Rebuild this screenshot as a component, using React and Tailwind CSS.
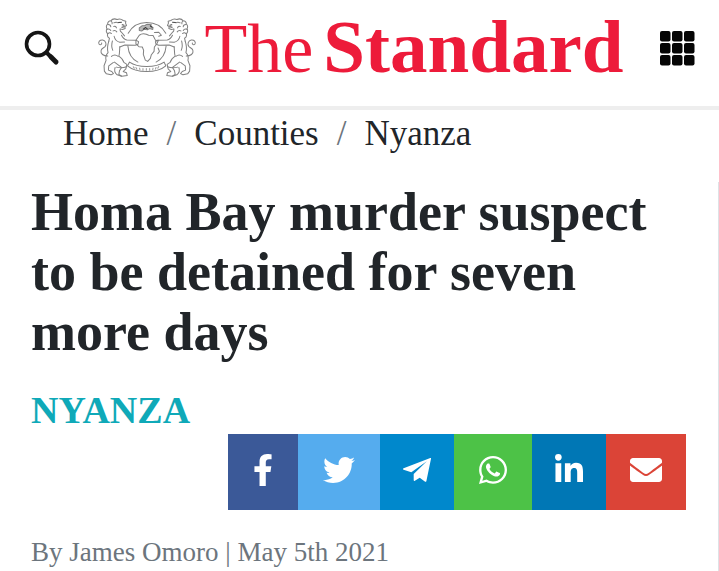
import React from 'react';
import { FaFacebookF, FaTwitter, FaWhatsapp, FaLinkedinIn, FaEnvelope } from 'react-icons/fa';

// Paper plane with the folded wing
const PlaneIcon = () => (
  <svg viewBox="0 0 28 24" className="h-6 w-7" fill="currentColor" aria-hidden="true">
    <path d="M27.300.1c.5-.2.800.100.700.600l-4.600 22.300c-.2.900-.900 1.100-1.600.600l-5.100-3.800-4.800 3c-.7.400-1.200.1-1.200-.7v-6L23.800 3.200 8.300 14.200.6 11.700c-.8-.3-.8-1.100 0-1.400z" />
  </svg>
);

const crumbs = ['Home', 'Counties', 'Nyanza'];

const shareLinks = [
  { name: 'Facebook', icon: FaFacebookF, style: 'w-[70px] bg-[#3b5998]' },
  { name: 'Twitter', icon: FaTwitter, style: 'w-[82px] bg-[#55acee]' },
  { name: 'Telegram', icon: PlaneIcon, style: 'w-[74px] bg-[#0088cc]' },
  { name: 'WhatsApp', icon: FaWhatsapp, style: 'w-[78px] bg-[#4dc247]' },
  { name: 'LinkedIn', icon: FaLinkedinIn, style: 'w-[74px] bg-[#0077b5]' },
  { name: 'Email', icon: FaEnvelope, style: 'w-[80px] bg-[#db4437]' },
];

// One lion of the crest, the other one is mirrored
const Lion = () => (
  <>
    {/* mane and face */}
    <path d="M82 41c-7-3-15-1-19 4-6 0-10 5-9 10-5 3-5 10-2 14-4 5-2 12 2 14-2 6 1 12 5 14l-2 9" />
    <path d="M82 41c6-2 13-1 18 3l8 2-1 6 3 7-5 3 1 6-8 3-7-2c-1 5 1 8 4 10l9 11" />
    <path d="M64 46c3 2 4 5 3 8m-12 2c5 0 8 3 8 7m-11 7c5-2 9 0 11 4m-9 10c4-4 8-4 11-1m7-32c4-2 9-3 13 0m-13 11c4-2 7 0 8 4m-10 9c5-3 9 0 11 3" />
    <path d="m86 50 9-1m2 8 6 1m-7 6 7-1" stroke="#444" />
    {/* forelegs */}
    <path d="M95 88c4 8 9 13 16 14l27 1 8 4-2 8-8 3-31-1-15 6" />
    <path d="M73 91c2 9 9 16 17 18l14-1" />
    {/* body, tail and hind legs */}
    <path d="M57 106c-4 12-5 23-2 34-7 7-8 15-6 23l-6 16 1 16 6 8 14 3 7-4-5-6-10-4 1-13 14-10" />
    <path d="M90 122c-1 11 0 20-3 28 8 5 13 11 15 19l9 6-3 13-8 8 10 4 2 8-16 2-9-5 2-11 6-10-9-7-12-9" />
    <path d="M68 105c-3 10-3 19 1 28m-4 18c6-5 14-5 20 0" />
    <path d="M54 150c-13 0-22-7-20-16 1-7 8-8 12-12 6-7 2-18-7-20-9-1-14 6-11 12 3 4 9 2 8-3" />
    <path d="M76 184c-3 8-1 16 6 22l13 4m-15-27c10 3 20 3 30-1" />
  </>
);

const Crest = () => (
  <svg
    viewBox="22 37 298 178"
    className="h-[60px] w-[100px] shrink-0"
    fill="none"
    stroke="#808080"
    strokeWidth="3"
    strokeLinejoin="round"
    strokeLinecap="round"
    aria-hidden="true"
  >
    <Lion />
    <g transform="translate(342 0) scale(-1 1)">
      <Lion />
    </g>
    {/* globe */}
    <path d="M115 82c11-20 31-32 55-32s46 12 57 32M114 120c2 22 13 40 30 48m54 0c17-8 28-26 30-48" />
    <path d="m148 66 8-6 9-1 6-4 13 2-3 5 8 3-1 6-9-3-7 4-9-2-7 5-8-1z" fill="#b8b8b8" />
    <path d="m160 70 7-5 5 4m9-9 5 4" stroke="#333" />
    <path d="M148 88c5-4 14-5 21-3l7 3 13 1 8 15 8-1-5 11-7 9-1 13-8 10-3 11-8 9-7-4-6-17 1-12-4-10-10-1-9-8v-11z" />
    <path d="m193 80 13-1 8 9-8 3m-2 35 4 10-5 7" />
    {/* motto ribbon */}
    <path d="M119 168c14 10 32 13 51 13s38-3 52-13l5 11c-14 12-34 17-57 17s-43-5-57-17z" />
    <path d="m130 182 3 4m5-2 3 5m8-3 1 5m9-4v5m10-5v5m10-5v5m10-6-1 5m10-7-2 5m10-8-3 5" stroke="#999" />
  </svg>
);

const GridIcon = () => (
  <svg viewBox="0 0 35 35" className="h-[35px] w-[35px]" fill="#050505" aria-hidden="true">
    {[0, 12, 24].map((y) =>
      [0, 12, 24].map((x) => (
        <rect key={`${x}-${y}`} x={x} y={y} width="10.5" height="10.5" rx="2" />
      ))
    )}
  </svg>
);

const Header = () => (
  <header className="flex items-center justify-between border-b-4 border-[#eeeeee] bg-white px-6 pt-0.5 pb-3">
    <button type="button" aria-label="Search">
      <svg
        viewBox="0 0 36 36"
        className="h-9 w-9"
        fill="none"
        stroke="#151515"
        strokeLinecap="round"
        aria-hidden="true"
      >
        <circle cx="14" cy="14" r="11.5" strokeWidth="3.6" />
        <path d="m23 23 3 3" strokeWidth="4" />
        <path d="m27 27 5 5" strokeWidth="5" />
      </svg>
    </button>
    <a href="#home" className="flex items-center gap-2 text-[#ed1b3a]">
      <Crest />
      <span className="flex items-baseline gap-2.5 leading-[90px] whitespace-nowrap">
        <span className="text-[70px]">The</span>
        <span className="text-[75px] font-bold">Standard</span>
      </span>
    </a>
    <button type="button" aria-label="Menu">
      <GridIcon />
    </button>
  </header>
);

const App = () => {
  return (
    <div className="bg-white font-['Liberation_Serif',serif] text-[#212529]">
      <Header />

      <nav aria-label="Breadcrumb" className="px-[63px] pt-0.5">
        <ol className="flex gap-[18px] text-[35px] leading-[44px]">
          {crumbs.map((crumb, i) => (
            <li key={crumb} className="flex gap-[18px]">
              {i > 0 && <span className="text-[#6c757d]">/</span>}
              <a href={`#${crumb.toLowerCase()}`}>{crumb}</a>
            </li>
          ))}
        </ol>
      </nav>

      <main className="mt-[26px] border-r border-[#dee2e6] pr-8 pb-1 pl-[31px]">
        <h1 className="text-[54px] leading-[60px] font-bold">
          Homa Bay murder suspect to be detained for seven more days
        </h1>

        <a href="#nyanza" className="mt-6 block text-[38px] leading-[48px] font-bold text-[#0fa9b8]">
          NYANZA
        </a>

        {/* Share buttons */}
        <div className="flex justify-end">
          {shareLinks.map(({ name, icon: Icon, style }) => (
            <a
              key={name}
              href={`#${name.toLowerCase()}`}
              aria-label={`Share on ${name}`}
              className={`flex h-[76px] items-center justify-center pb-1 text-[32px] text-white ${style}`}
            >
              <Icon />
            </a>
          ))}
        </div>

        <p className="mt-6 text-[27px] leading-[36px] text-[#6c757d]">By James Omoro | May 5th 2021</p>
      </main>
    </div>
  );
};

export default App;
